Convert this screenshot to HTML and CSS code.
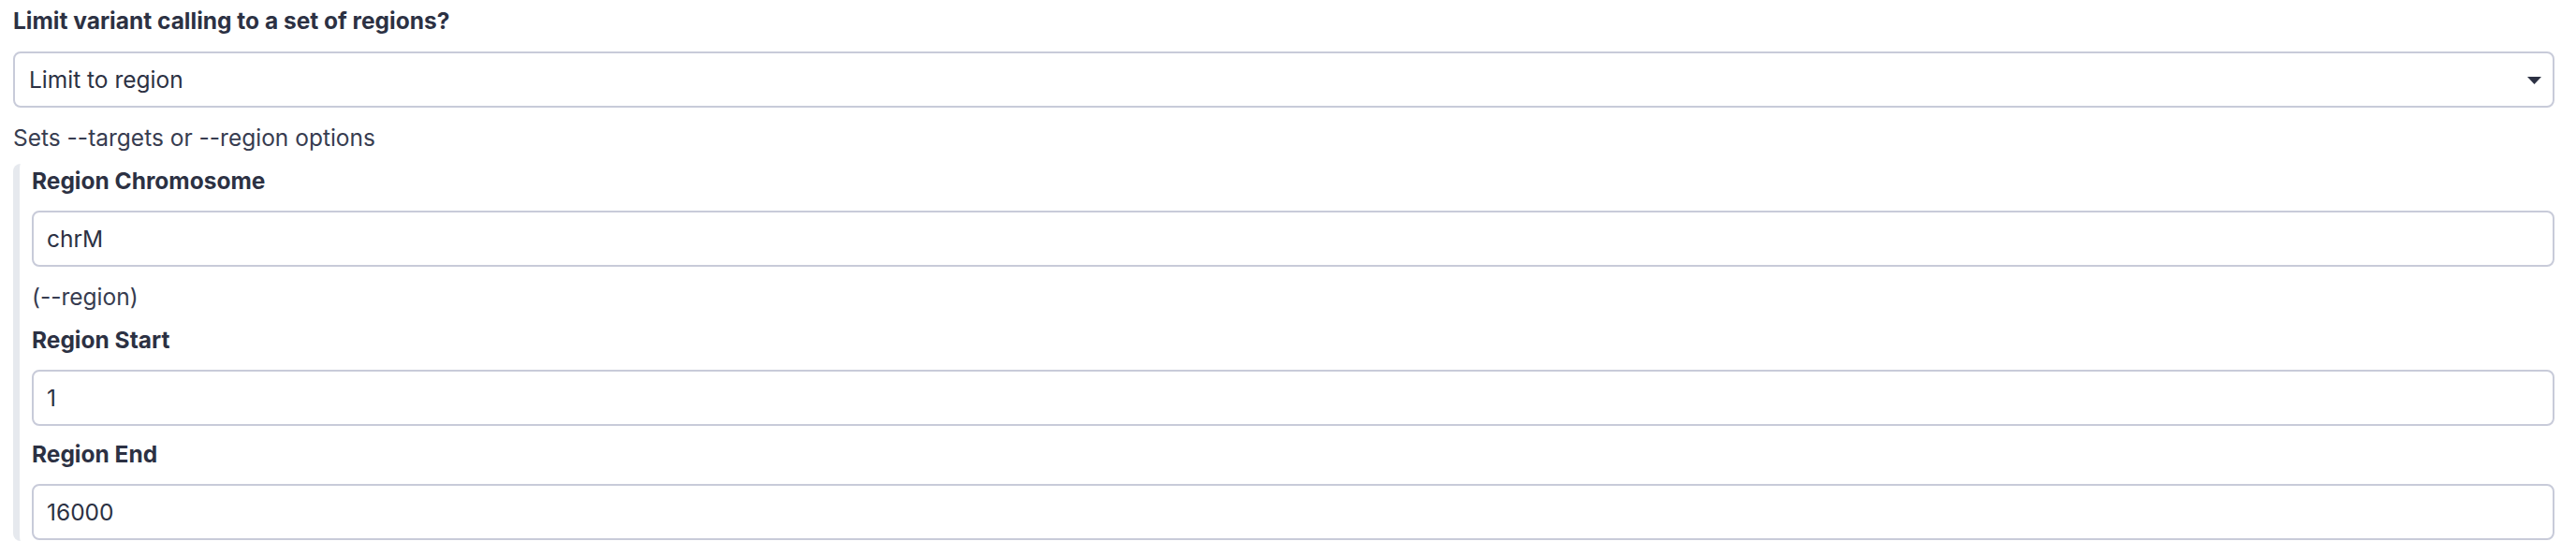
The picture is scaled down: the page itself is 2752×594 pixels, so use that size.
FILE: index.html
```html
<!DOCTYPE html>
<html lang="en">
<head>
<meta charset="utf-8">
<title>Limit variant calling</title>
<link rel="stylesheet" href="styles.css">
</head>
<body>
<div class="form">
  <div class="field">
    <div class="field-title">Limit variant calling to a set of regions?</div>
    <div class="select">
      <span class="select-value">Limit to region</span>
      <svg class="caret" width="15" height="8" viewBox="0 0 15 8" aria-hidden="true"><path d="M0 0 H15 L7.5 8 Z" fill="#2c3143"/></svg>
    </div>
    <div class="field-help">Sets --targets or --region options</div>
  </div>
  <div class="section">
    <div class="field">
      <div class="field-title">Region Chromosome</div>
      <input class="text-input" type="text" value="chrM" readonly>
      <div class="field-help">(--region)</div>
    </div>
    <div class="field field-next">
      <div class="field-title">Region Start</div>
      <input class="text-input" type="text" value="1" readonly>
    </div>
    <div class="field field-after-input">
      <div class="field-title">Region End</div>
      <input class="text-input" type="text" value="16000" readonly>
    </div>
  </div>
</div>
</body>
</html>
```
FILE: styles.css
```css
html, body {
  margin: 0;
  padding: 0;
  background: #ffffff;
}

body {
  font-family: "Inter", "Noto Sans", sans-serif;
  font-size: 24.5px;
  line-height: 36px;
  color: #2c3143;
}

.form {
  padding: 4px 23px 0 14px;
}

.field {
  display: flex;
  flex-direction: column;
}

.field-title {
  font-weight: 700;
  height: 36px;
}

.select,
.text-input {
  box-sizing: border-box;
  height: 60px;
  border: 2px solid #c8cbd9;
  border-radius: 8px;
  background: #ffffff;
}

.select {
  margin-top: 15px;
  display: flex;
  align-items: center;
  justify-content: space-between;
  padding: 0 12px 0 15px;
}

.text-input {
  margin-top: 14px;
}

.select-value {
  line-height: 36px;
}

.caret {
  display: block;
  margin-top: 1px;
}

.text-input {
  width: 100%;
  padding: 0 14px;
  font-family: inherit;
  font-size: 24.5px;
  color: #2c3143;
  outline: none;
}

.field-help {
  margin-top: 14px;
  color: #373c50;
}

.section {
  margin-top: 10px;
  border-left: 7px solid #e6e9ee;
  border-radius: 8px;
  padding-left: 13px;
  padding-bottom: 1px;
}

.field-next {
  margin-top: 10px;
}

.field-after-input {
  margin-top: 12px;
}
```
